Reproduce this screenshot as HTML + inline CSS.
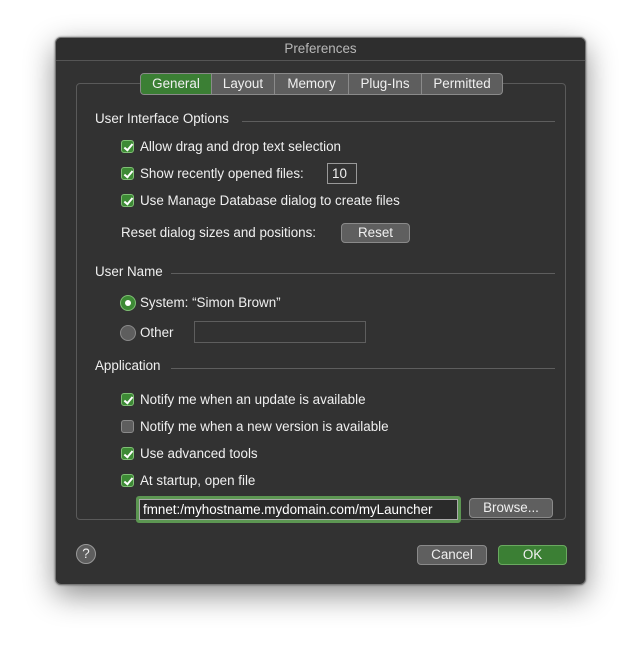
<!DOCTYPE html>
<html><head><style>
body{margin:0;width:643px;height:660px;background:#fff;position:relative;overflow:hidden;font-family:"Liberation Sans",Arial,sans-serif;font-size:13.4px;color:#f0f0f0}
.win{position:absolute;left:55px;top:37px;width:531px;height:548px;background:#323232;border:1px solid #777;border-radius:6px;box-shadow:0 10px 30px rgba(0,0,0,.45),0 0 2px rgba(0,0,0,.5);box-sizing:border-box;overflow:hidden}
.title{position:absolute;left:0;top:0;right:0;height:22px;background:#2e2e2e;border-bottom:1px solid #555;text-align:center;line-height:22px;color:#b8b8b8;font-size:13.4px}
.a{position:absolute;white-space:nowrap}
.grp{position:absolute;left:76px;top:83px;width:490px;height:437px;border:1px solid #5a5a5a;border-radius:4px;box-sizing:border-box}
.tabs{position:absolute;left:140px;top:73px;height:20px;display:flex;border:1px solid #8a8a8a;border-radius:4px;overflow:hidden;background:#5e5e5e}
.tabs div{height:20px;line-height:19px;text-align:center;border-left:1px solid #8a8a8a;color:#f0f0f0}
.tabs div:first-child{border-left:none;background:#3b7f34}
.cb{position:absolute;width:13px;height:13px;border-radius:3px;background:#3d8a35;border:1px solid #7fbf74;box-sizing:border-box}
.cb::after{content:"";position:absolute;left:3.5px;top:0.5px;width:3px;height:7px;border:solid #fff;border-width:0 2px 2px 0;transform:rotate(40deg)}
.cb.off{background:#5e5e5e;border-color:#8a8a8a}
.cb.off::after{display:none}
.line{position:absolute;height:1px;background:#5e5e5e}
.btn{position:absolute;height:20px;border:1px solid #8a8a8a;border-radius:4px;background:#5f5f5f;box-sizing:border-box;text-align:center;line-height:18px;color:#f0f0f0}
</style></head><body>
<div class="win"><div class="title">Preferences</div></div>
<div class="grp"></div>
<div class="tabs"><div style="width:70px">General</div><div style="width:62px">Layout</div><div style="width:73px">Memory</div><div style="width:72px">Plug-Ins</div><div style="width:80px">Permitted</div></div>

<div class="a" style="left:95px;top:111px">User Interface Options</div><div class="line" style="left:242px;top:121px;width:313px"></div>
<div class="cb" style="left:121px;top:140px"></div><div class="a" style="left:140px;top:139px">Allow drag and drop text selection</div>
<div class="cb" style="left:121px;top:167px"></div><div class="a" style="left:140px;top:166px">Show recently opened files:</div>
<div class="a" style="left:327px;top:163px;width:30px;height:21px;border:1px solid #999;box-sizing:border-box;padding-left:4px;line-height:19px">10</div>
<div class="cb" style="left:121px;top:194px"></div><div class="a" style="left:140px;top:193px">Use Manage Database dialog to create files</div>
<div class="a" style="left:121px;top:225px">Reset dialog sizes and positions:</div>
<div class="btn" style="left:341px;top:223px;width:69px">Reset</div>

<div class="a" style="left:95px;top:264px">User Name</div><div class="line" style="left:171px;top:273px;width:384px"></div>
<div class="a" style="left:120px;top:295px;width:16px;height:16px;border-radius:50%;background:#3d8a35;border:1px solid #7fbf74;box-sizing:border-box"><div style="position:absolute;left:4px;top:4px;width:6px;height:6px;border-radius:50%;background:#fff"></div></div>
<div class="a" style="left:140px;top:295px">System: “Simon Brown”</div>
<div class="a" style="left:120px;top:325px;width:16px;height:16px;border-radius:50%;background:#5e5e5e;border:1px solid #8a8a8a;box-sizing:border-box"></div>
<div class="a" style="left:140px;top:325px">Other</div>
<div class="a" style="left:194px;top:321px;width:172px;height:22px;border:1px solid #5e5e5e;box-sizing:border-box"></div>

<div class="a" style="left:95px;top:358px">Application</div><div class="line" style="left:171px;top:368px;width:384px"></div>
<div class="cb" style="left:121px;top:393px"></div><div class="a" style="left:140px;top:392px">Notify me when an update is available</div>
<div class="cb off" style="left:121px;top:420px"></div><div class="a" style="left:140px;top:419px">Notify me when a new version is available</div>
<div class="cb" style="left:121px;top:447px"></div><div class="a" style="left:140px;top:446px">Use advanced tools</div>
<div class="cb" style="left:121px;top:474px"></div><div class="a" style="left:140px;top:473px">At startup, open file</div>
<div class="a" style="left:136px;top:496px;width:325px;height:27px;border:3px solid #5c9652;border-radius:3px;box-sizing:border-box;background:#2a2a2a"><div style="position:absolute;left:0;top:0;right:0;bottom:0;border:1px solid #aaa;padding-left:3px;line-height:19px;color:#fff">fmnet:/myhostname.mydomain.com/myLauncher</div></div>
<div class="btn" style="left:469px;top:498px;width:84px">Browse...</div>

<div class="a" style="left:76px;top:544px;width:20px;height:20px;border-radius:50%;background:#5e5e5e;border:1px solid #999;box-sizing:border-box;text-align:center;line-height:18px;color:#eee">?</div>
<div class="btn" style="left:417px;top:545px;width:70px">Cancel</div>
<div class="btn" style="left:498px;top:545px;width:69px;background:#3b7f34;border-color:#6aa960">OK</div>
</body></html>
